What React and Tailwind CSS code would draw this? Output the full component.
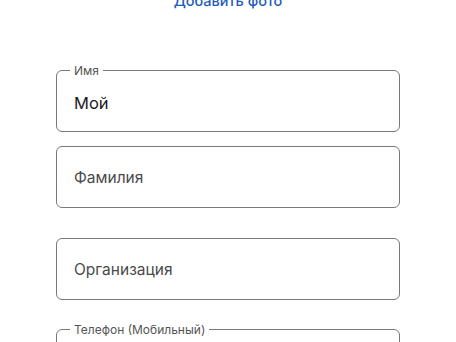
import React from 'react';

function Field({ label, value, placeholder, className = '' }) {
    return (
        <div className={`relative h-[62px] rounded-[6px] border border-[#7a7a7a] ${className}`}>
            {label && (
                <span className="absolute left-[13px] top-[-8px] bg-white px-[4px] text-[12px] leading-4 text-[#555]">
                    {label}
                </span>
            )}
            <div className={`flex h-full items-center pl-[17px] ${label ? 'pt-[5px]' : 'pt-[1px]'}`}>
                {value ? (
                    <span className="text-[16.5px] text-[#1c1c1c]">{value}</span>
                ) : (
                    <span className="text-[15.5px] text-[#4a4a4a]">{placeholder}</span>
                )}
            </div>
        </div>
    );
}

export default function App() {
    return (
        <div className="h-[342px] w-[456px] overflow-hidden bg-white font-['Inter',sans-serif]">
            <div className="mt-[-11px] text-center text-[14.5px] font-medium leading-6 text-[#1f5cb8]">
                Добавить фото
            </div>
            <div className="mt-[57px] px-[56px]">
                <Field label="Имя" value="Мой" />
                <Field placeholder="Фамилия" className="mt-[14px]" />
                <Field placeholder="Организация" className="mt-[30px]" />
                <Field label="Телефон (Мобильный)" className="mt-[29px]" />
            </div>
        </div>
    );
}
